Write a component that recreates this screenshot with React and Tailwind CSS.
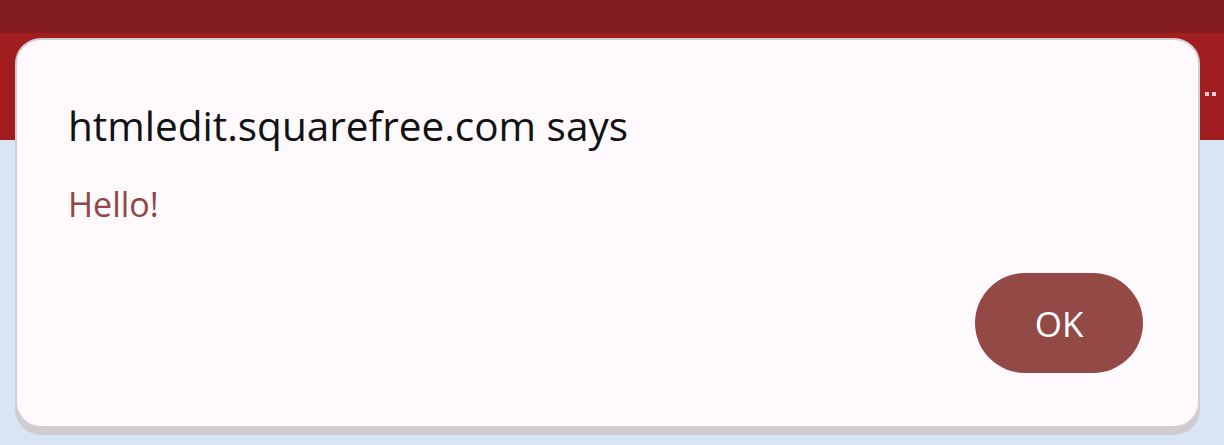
import React from 'react';

export default function App() {
  return (
    <div className="relative w-[1224px] h-[445px] overflow-hidden bg-[#d8e6f4]" style={{ fontFamily: '"Open Sans", "Noto Sans", sans-serif' }}>
      <div className="h-[33px] bg-[#831c1e]" />
      <div className="h-[107px] bg-[#a11d20] flex justify-end items-start pt-[59px] pr-[8px] gap-[3px]">
        <span className="w-[4px] h-[4px] bg-white/80" />
        <span className="w-[4px] h-[4px] bg-white/80" />
      </div>

      <div className="absolute left-[15px] top-[38px] w-[1185px] h-[390px] rounded-[26px] bg-[#fdf9fd] border-2 border-[#d2ced2] shadow-[0_7px_0_0_#d0ccd2] flex flex-col">
        <div className="pl-[51px] pt-[66px] text-[40.5px] leading-none text-[#111]">
          htmledit.squarefree.com says
        </div>
        <div className="pl-[51px] pt-[40px] text-[34px] leading-none text-[#8f4743]">
          Hello!
        </div>
        <div className="flex-1 flex items-end justify-end pr-[55px] pb-[53px]">
          <button className="w-[168px] h-[100px] rounded-full bg-[#934a46] text-white text-[35px] leading-none">
            OK
          </button>
        </div>
      </div>
    </div>
  );
}
